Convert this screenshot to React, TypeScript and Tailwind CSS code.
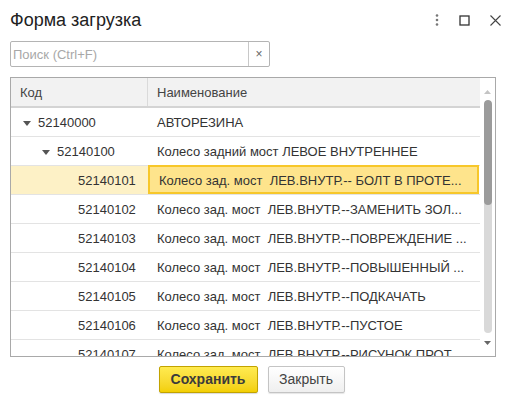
import React from "react"

type Row = {
  code: string
  name: string
  level: number
  open?: boolean
  selected?: boolean
}

const rows: Row[] = [
  { code: "52140000", name: "АВТОРЕЗИНА", level: 0, open: true },
  { code: "52140100", name: "Колесо задний мост ЛЕВОЕ ВНУТРЕННЕЕ", level: 1, open: true },
  { code: "52140101", name: "Колесо зад. мост  ЛЕВ.ВНУТР.-- БОЛТ В ПРОТЕ...", level: 2, selected: true },
  { code: "52140102", name: "Колесо зад. мост  ЛЕВ.ВНУТР.--ЗАМЕНИТЬ ЗОЛ...", level: 2 },
  { code: "52140103", name: "Колесо зад. мост  ЛЕВ.ВНУТР.--ПОВРЕЖДЕНИЕ ...", level: 2 },
  { code: "52140104", name: "Колесо зад. мост  ЛЕВ.ВНУТР.--ПОВЫШЕННЫЙ ...", level: 2 },
  { code: "52140105", name: "Колесо зад. мост  ЛЕВ.ВНУТР.--ПОДКАЧАТЬ", level: 2 },
  { code: "52140106", name: "Колесо зад. мост  ЛЕВ.ВНУТР.--ПУСТОЕ", level: 2 },
  { code: "52140107", name: "Колесо зад. мост  ЛЕВ.ВНУТР.--РИСУНОК ПРОТ...", level: 2 },
]

const indent = ["pl-[12px]", "pl-[31px]", "pl-[67px]"]

const Arrow = () => (
  <svg width="8" height="5" viewBox="0 0 8 5" className="mr-[7px] shrink-0">
    <path d="M0 0 H8 L4 5 Z" fill="#555" />
  </svg>
)

const TreeRow = ({ row }: { row: Row }) => {
  return (
    <div className="flex h-[29px] shrink-0 border-b border-[#e3e3e3]">
      <div
        className={`flex w-[137px] shrink-0 items-center pt-[2px] ${indent[row.level]} ${
          row.selected ? "bg-[#fdf1c6]" : ""
        }`}
      >
        {row.open && <Arrow />}
        <span>{row.code}</span>
      </div>
      <div
        className={`flex flex-1 items-center whitespace-pre pl-[9px] pt-[2px] ${
          row.selected ? "-mt-px mr-[1px] h-[29px] border-2 border-[#f7c72a] bg-[#fee48c] pl-[8px]" : ""
        }`}
      >
        {row.name}
      </div>
    </div>
  )
}

export default function App() {
  return (
    <div className="flex h-[405px] w-[515px] flex-col bg-white text-[13px] text-[#333] [font-family:'Liberation_Sans',Arial,sans-serif]">
      {/* title bar */}
      <div className="flex h-[41px] items-start px-[10px] pt-[8px]">
        <h1 className="text-[18px] leading-[24px] text-[#222]">Форма загрузка</h1>
        <div className="ml-auto flex items-center gap-[20px] pt-[6px] pr-[4px]">
          <svg width="4" height="12" viewBox="0 0 4 12">
            <circle cx="2" cy="1.5" r="1.3" fill="#777" />
            <circle cx="2" cy="6" r="1.3" fill="#777" />
            <circle cx="2" cy="10.5" r="1.3" fill="#777" />
          </svg>
          <svg width="11" height="11" viewBox="0 0 11 11">
            <rect x="1" y="1" width="9" height="9" fill="none" stroke="#333" strokeWidth="1.3" />
          </svg>
          <svg width="11" height="11" viewBox="0 0 11 11">
            <path d="M0.5 0.5 L10.5 10.5 M10.5 0.5 L0.5 10.5" stroke="#444" strokeWidth="1.1" />
          </svg>
        </div>
      </div>

      {/* search */}
      <div className="ml-[10px] flex h-[26px] w-[260px] rounded-[2px] border border-[#b4b4b4]">
        <input
          placeholder="Поиск (Ctrl+F)"
          className="min-w-0 flex-1 px-[2px] pt-[1px] text-[13px] outline-none placeholder:text-[#a8a8a8]"
        />
        <div className="flex w-[21px] items-center justify-center border-l border-[#c8c8c8] text-[12px] text-[#666]">
          ×
        </div>
      </div>

      {/* table */}
      <div className="ml-[10px] mt-[10px] flex h-[280px] w-[486px] border border-[#a9a9a9]">
        <div className="flex min-w-0 flex-1 flex-col overflow-hidden">
          <div className="flex h-[30px] shrink-0 border-b-2 border-[#d4d4d4] bg-[#f2f2f2] text-[#444]">
            <div className="flex w-[137px] items-center border-r border-[#dadada] pl-[9px] pt-[2px]">Код</div>
            <div className="flex flex-1 items-center pl-[9px] pt-[2px]">Наименование</div>
          </div>
          {rows.map((r) => (
            <TreeRow key={r.code} row={r} />
          ))}
        </div>
        <div className="flex w-[15px] shrink-0 flex-col items-center">
          <div className="flex h-[22px] w-full items-end justify-center pb-[6px]">
            <svg width="7" height="4" viewBox="0 0 7 4">
              <path d="M0 4 H7 L3.5 0 Z" fill="#c4c4c4" />
            </svg>
          </div>
          <div className="flex h-[233px] w-[8px] flex-col overflow-hidden rounded-[4px] bg-[#d9d9d9]">
            <div className="h-[105px] rounded-[4px] bg-[#9b9b9b]" />
          </div>
          <div className="flex flex-1 items-center justify-center pb-[4px]">
            <svg width="7" height="4" viewBox="0 0 7 4">
              <path d="M0 0 H7 L3.5 4 Z" fill="#666" />
            </svg>
          </div>
        </div>
      </div>

      {/* buttons */}
      <div className="mt-[9px] flex justify-center gap-[10px] pr-[12px]">
        <button className="h-[27px] w-[99px] rounded-[2px] border border-[#c2a300] bg-gradient-to-b from-[#ffeb4f] to-[#f3cf00] text-[14px] font-bold text-[#3b3b3b] shadow-[0_1px_1px_rgba(0,0,0,0.15)]">
          Сохранить
        </button>
        <button className="h-[27px] w-[77px] rounded-[2px] border border-[#c4c4c4] bg-gradient-to-b from-white to-[#efefef] text-[14px] text-[#444] shadow-[0_1px_1px_rgba(0,0,0,0.1)]">
          Закрыть
        </button>
      </div>
    </div>
  )
}
